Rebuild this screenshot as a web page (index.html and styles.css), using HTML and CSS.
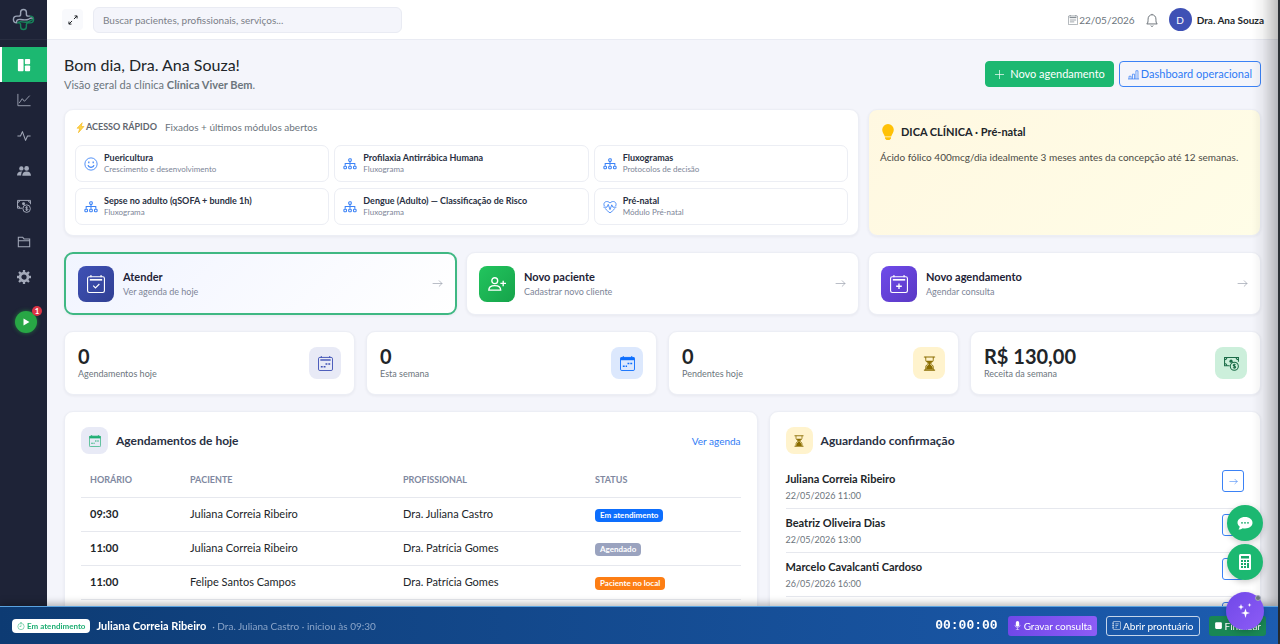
FILE: index.html
```
<!DOCTYPE html>
<html lang="pt-BR">
<head>
  <meta charset="UTF-8">
  <meta name="viewport" content="width=device-width, initial-scale=1.0">
  <title>Painel - Clínica Viver Bem</title>
  <link rel="stylesheet" href="styles.css">
</head>
<body>
  <svg class="sprite" aria-hidden="true">
    <symbol id="i-arrow" viewBox="0 0 16 16"><path d="M1.5 8h13M10.5 4l4 4-4 4" fill="none" stroke="currentColor" stroke-linecap="round" stroke-linejoin="round"/></symbol>
    <symbol id="i-flow" viewBox="0 0 16 16"><g fill="none" stroke="currentColor" stroke-width="1.2"><rect x="6.5" y="2" width="3" height="3" rx="1"/><path d="M8 5v5M2.5 10V7.500h11V10"/><rect x="1" y="10.500" width="3" height="3" rx="1"/><rect x="6.500" y="10.500" width="3" height="3" rx="1"/><rect x="12" y="10.500" width="3" height="3" rx="1"/></g></symbol>
    <symbol id="i-cal" viewBox="0 0 16 16"><rect x="0.500" y="1.500" width="15" height="14" rx="1.500" fill="none" stroke="currentColor"/><path d="M3.500 0v2M12.500 0v2" stroke="currentColor"/><path d="M2.500 3.500h11v1.500h-11z" fill="currentColor"/></symbol>
    <symbol id="i-calfill" viewBox="0 0 16 16"><rect x="0.500" y="1.500" width="15" height="14" rx="1.500" fill="none" stroke="currentColor"/><path d="M3.500 0v2M12.500 0v2" stroke="currentColor"/><path d="M0.500 1.500h15v3h-15z" fill="currentColor"/><path d="M3 11h2M6 11h1.500M8 8h2M11 8h2" stroke="currentColor" stroke-width="1.500"/></symbol>
    <symbol id="i-hour" viewBox="0 0 16 16"><path d="M2.500 1h11M2.500 15h11" stroke="currentColor" stroke-width="1.200" stroke-linecap="round"/><path d="M4 1v3c0 2 1.500 3 3 4-1.500 1-3 2-3 4v3M12 1v3c0 2-1.500 3-3 4 1.500 1 3 2 3 4v3" fill="none" stroke="currentColor"/><path d="M5 5h6c0 1.500-2 2.500-2.500 3 .5 2 2.500 2 3 5v1.500h-7V13c.5-3 2.500-3 3-5C7 7.500 5 6.500 5 5z" fill="currentColor"/></symbol>
    <symbol id="i-cash" viewBox="0 0 16 16"><g fill="none" stroke="currentColor" stroke-width="1.100"><path d="M6 10.500H.600V1.600h14.800V6M3 1.600A2.400 2.400 0 0 1 .600 4M13 1.600A2.400 2.400 0 0 0 15.400 4M3 10.500A2.400 2.400 0 0 0 .600 8"/><circle cx="11" cy="11" r="4.300"/><path d="M12.300 9.700c-.3-.7-2.500-.8-2.500.3 0 1.200 2.600.8 2.600 2 0 1.100-2.400 1-2.700.1M11 8.300v5.400"/></g><circle cx="7.500" cy="5.500" r="1.700" fill="currentColor"/></symbol>
  </svg>

  <aside class="sidebar">
    <a href="#" class="brand" aria-label="Início">
      <svg viewBox="0 0 24 24"><g fill="none" stroke-width="1.500" stroke-linecap="round"><path stroke="#9aa3b5" d="M5 15.500C2 15.500 1.500 13.500 1.500 12c0-2 1.500-3.500 3.500-3.500h2C8.500 8.500 9 7.800 9 6.500V4.500a3 3 0 0 1 6 0v2c0 1.300.6 2 2 2h1.500M5 15.500c-1-2.500 1-4 4-3.500 3.500.6 6 1 8.500-.5 1.500-1 2.500-1.300 4-1"/><path stroke="#17835a" d="M19 8.500c2.500 0 3.500 1.500 3.500 3.500s-1.500 3.500-3.500 3.500h-2c-1.500 0-2 .7-2 2v2a3 3 0 0 1-6 0v-2c0-1.300-.6-2-2-2H6c1-1.500 2.500-1.500 4.500-1 3.500.8 6.500.5 8.500-1 1-.8 2-1.500 3.500-1.500"/></g></svg>
    </a>
    <nav>
      <a href="#" class="active" aria-label="Painel"><svg viewBox="0 0 16 16" fill="currentColor"><rect x="1" y="1" width="6.500" height="14" rx="1"/><rect x="9" y="1" width="6" height="6" rx="1"/><rect x="9" y="8.500" width="6" height="6.500" rx="1"/></svg></a>
      <a href="#" aria-label="Relatórios"><svg viewBox="0 0 16 16" fill="none" stroke="currentColor"><path d="M1 1v13.500h14.500M2.500 11.500L6 6.500l2.500 3L14.500 3"/></svg></a>
      <a href="#" aria-label="Atividade"><svg viewBox="0 0 16 16" fill="none" stroke="currentColor" stroke-width="1.200" stroke-linejoin="round"><path d="M.500 8H4l2.200-5 3.600 10L12 8h3.500"/></svg></a>
      <a href="#" aria-label="Pacientes"><svg viewBox="0 0 16 16" fill="currentColor"><circle cx="5" cy="5" r="2.500"/><circle cx="11" cy="5" r="2.700"/><path d="M0 13c0-3 2-4.500 5-4.500l1 .2C5 10 4.800 11 4.800 13zM6 13.500c0-3.500 2-5 5-5s5 1.500 5 5z"/></svg></a>
      <a href="#" aria-label="Financeiro"><svg><use href="#i-cash"/></svg></a>
      <a href="#" aria-label="Arquivos"><svg viewBox="0 0 16 16" fill="none" stroke="currentColor" stroke-width="1.200"><path d="M1.500 13.500v-11h5l1.500 2h6.500v9zM1.500 6.500h13"/></svg></a>
      <a href="#" aria-label="Configurações"><svg viewBox="0 0 16 16"><circle cx="8" cy="8" r="4.500" fill="none" stroke="currentColor" stroke-width="3"/><path d="M8 0v3M8 13v3M0 8h3M13 8h3M2.300 2.300l2 2M11.700 11.700l2 2M2.300 13.700l2-2M11.700 4.300l2-2" stroke="currentColor" stroke-width="2.600"/></svg></a>
    </nav>
    <button class="play" aria-label="Atendimentos em andamento"><svg viewBox="0 0 16 16"><path d="M4 2.500v11L13.500 8z" fill="currentColor"/></svg><span class="count">1</span></button>
  </aside>

  <div class="page">
    <header class="topbar">
      <button class="expand" aria-label="Tela cheia"><svg viewBox="0 0 16 16" fill="none" stroke="currentColor" stroke-width="1.600"><path d="M9.500 6.500l5-5M10.500 1.500h4v4M6.500 9.500l-5 5M1.500 10.500v4h4"/></svg></button>
      <input type="search" aria-label="Buscar" placeholder="Buscar pacientes, profissionais, serviços...">
      <div class="user-area">
        <span class="date"><svg viewBox="0 0 16 16"><use href="#i-cal"/><path d="M3 8h10M3 11h7" stroke="currentColor"/></svg>22/05/2026</span>
        <button class="bell" aria-label="Notificações"><svg viewBox="0 0 16 16" fill="none" stroke="currentColor"><path d="M8 1v1M2 12.500c1.500-1 1.500-3 1.500-5.500 0-3 2-5 4.500-5s4.500 2 4.500 5c0 2.500 0 4.500 1.500 5.500zM6.500 14.500c.5 1 2.500 1 3 0"/></svg></button>
        <span class="avatar">D</span>
        <strong>Dra. Ana Souza</strong>
      </div>
    </header>

    <main>
      <div class="heading">
        <div>
          <h1>Bom dia, Dra. Ana Souza!</h1>
          <p>Visão geral da clínica <strong>Clínica Viver Bem</strong>.</p>
        </div>
        <div class="heading-actions">
          <a href="#" class="btn btn-green"><svg viewBox="0 0 16 16"><path d="M8 2v12M2 8h12" stroke="currentColor" stroke-linecap="round"/></svg>Novo agendamento</a>
          <a href="#" class="btn btn-outline"><svg viewBox="0 0 16 16" fill="none" stroke="currentColor"><path d="M0 14.500h16M1.500 14.500v-4h3v4M6.500 14.500v-7h3v7M11.500 14.500v-12h3v12"/></svg>Dashboard operacional</a>
        </div>
      </div>

      <section class="row row-thirds">
        <div class="card quick">
          <div class="quick-title"><svg viewBox="0 0 16 16"><path d="M10.500 1L3 9h4l-2 6.500L13 6.500H9z" fill="#ffd54a" stroke="#f5b921"/></svg><h2>ACESSO RÁPIDO</h2><span>Fixados + últimos módulos abertos</span></div>
          <div class="quick-grid">
            <a href="#"><svg viewBox="0 0 16 16" fill="none" stroke="currentColor"><circle cx="8" cy="8" r="7"/><path d="M4.500 9.500c1.200 3 5.800 3 7 0M5.500 5v2M10.500 5v2" stroke-width="1.400"/></svg><span><b>Puericultura</b><small>Crescimento e desenvolvimento</small></span></a>
            <a href="#"><svg><use href="#i-flow"/></svg><span><b>Profilaxia Antirrábica Humana</b><small>Fluxograma</small></span></a>
            <a href="#"><svg><use href="#i-flow"/></svg><span><b>Fluxogramas</b><small>Protocolos de decisão</small></span></a>
            <a href="#"><svg><use href="#i-flow"/></svg><span><b>Sepse no adulto (qSOFA + bundle 1h)</b><small>Fluxograma</small></span></a>
            <a href="#"><svg><use href="#i-flow"/></svg><span><b>Dengue (Adulto) — Classificação de Risco</b><small>Fluxograma</small></span></a>
            <a href="#"><svg viewBox="0 0 16 16" fill="none" stroke="currentColor"><path d="M1.500 7C-.5 2 5 0 8 3.500 11 0 16.500 2 14.500 7M2.500 9.500C4 12 6.500 13.500 8 14.700c1.500-1.200 4-2.700 5.500-5.200M.500 8.200h4L6 5l2 6 2-5.500 1.300 2.700h4"/></svg><span><b>Pré-natal</b><small>Módulo Pré-natal</small></span></a>
          </div>
        </div>
        <div class="card tip">
          <h2><svg viewBox="0 0 16 16" fill="#ffc107"><path d="M8 0a5.800 5.800 0 0 0-5.800 5.800c0 2.800 1.800 4 2.600 6.700h6.400c.8-2.700 2.600-3.900 2.600-6.700A5.800 5.800 0 0 0 8 0zM5 13.300h6v1.200L9.500 16h-3L5 14.500z"/></svg>DICA CLÍNICA · Pré-natal</h2>
          <p>Ácido fólico 400mcg/dia idealmente 3 meses antes da concepção até 12 semanas.</p>
        </div>
      </section>

      <section class="row actions">
        <a href="#" class="card action primary"><span class="tile blue"><svg viewBox="0 0 16 16"><use href="#i-cal"/><path d="M5.500 9.500l2 2 3.500-3.500" fill="none" stroke="currentColor"/></svg></span><span><b>Atender</b><small>Ver agenda de hoje</small></span><svg class="go"><use href="#i-arrow"/></svg></a>
        <a href="#" class="card action"><span class="tile green"><svg viewBox="0 0 16 16" fill="none" stroke="currentColor" stroke-width="1.200"><circle cx="6" cy="5" r="2.600"/><path d="M.700 13.500c0-3 2-4 5.300-4s5.300 1 5.300 4zM13.500 5v5M11 7.500h5"/></svg></span><span><b>Novo paciente</b><small>Cadastrar novo cliente</small></span><svg class="go"><use href="#i-arrow"/></svg></a>
        <a href="#" class="card action"><span class="tile purple"><svg viewBox="0 0 16 16"><use href="#i-cal"/><path d="M8 7.500v5M5.500 10h5" stroke="currentColor" stroke-width="1.200"/></svg></span><span><b>Novo agendamento</b><small>Agendar consulta</small></span><svg class="go"><use href="#i-arrow"/></svg></a>
      </section>

      <section class="row stats">
        <div class="card stat"><div><b>0</b><small>Agendamentos hoje</small></div><span class="chip indigo"><svg viewBox="0 0 16 16"><use href="#i-cal"/><path d="M3 11.500h2M6 11.500h2M8 8.500h2M11 8.500h2" stroke="currentColor" stroke-width="1.500"/></svg></span></div>
        <div class="card stat"><div><b>0</b><small>Esta semana</small></div><span class="chip sky"><svg><use href="#i-calfill"/></svg></span></div>
        <div class="card stat"><div><b>0</b><small>Pendentes hoje</small></div><span class="chip amber"><svg><use href="#i-hour"/></svg></span></div>
        <div class="card stat"><div><b>R$ 130,00</b><small>Receita da semana</small></div><span class="chip mint"><svg><use href="#i-cash"/></svg></span></div>
      </section>

      <section class="row lists">
        <div class="card panel">
          <div class="panel-head"><span class="chip small indigo green-icon"><svg><use href="#i-calfill"/></svg></span><h2>Agendamentos de hoje</h2><a href="#">Ver agenda</a></div>
          <table>
            <thead><tr><th>HORÁRIO</th><th>PACIENTE</th><th>PROFISSIONAL</th><th>STATUS</th></tr></thead>
            <tbody>
              <tr><td>09:30</td><td>Juliana Correia Ribeiro</td><td>Dra. Juliana Castro</td><td><span class="badge in-progress">Em atendimento</span></td></tr>
              <tr><td>11:00</td><td>Juliana Correia Ribeiro</td><td>Dra. Patrícia Gomes</td><td><span class="badge scheduled">Agendado</span></td></tr>
              <tr><td>11:00</td><td>Felipe Santos Campos</td><td>Dra. Patrícia Gomes</td><td><span class="badge on-site">Paciente no local</span></td></tr>
            </tbody>
          </table>
        </div>
        <div class="card panel">
          <div class="panel-head"><span class="chip small amber"><svg><use href="#i-hour"/></svg></span><h2>Aguardando confirmação</h2></div>
          <ul class="waiting">
            <li><div><b>Juliana Correia Ribeiro</b><small>22/05/2026 11:00</small></div><a href="#" aria-label="Abrir"><svg><use href="#i-arrow"/></svg></a></li>
            <li><div><b>Beatriz Oliveira Dias</b><small>22/05/2026 13:00</small></div><a href="#" aria-label="Abrir"><svg><use href="#i-arrow"/></svg></a></li>
            <li><div><b>Marcelo Cavalcanti Cardoso</b><small>26/05/2026 16:00</small></div><a href="#" aria-label="Abrir"><svg><use href="#i-arrow"/></svg></a></li>
            <li class="next"><a href="#" aria-label="Abrir"></a></li>
          </ul>
        </div>
      </section>
    </main>
  </div>

  <div class="edge"></div>

  <footer class="session">
    <span class="status"><svg viewBox="0 0 16 16" fill="none" stroke="currentColor"><circle cx="8" cy="9" r="6.300"/><path d="M8 5v4H5M6 .800h4"/></svg>Em atendimento</span>
    <strong>Juliana Correia Ribeiro</strong>
    <span class="info">· Dra. Juliana Castro · iniciou às 09:30</span>
    <span class="timer">00:00:00</span>
    <button class="record"><svg viewBox="0 0 16 16"><rect x="5" y="0" width="6" height="10" rx="3" fill="currentColor"/><path d="M3.500 7c0 6 9 6 9 0M8 12v3.500M5 15.500h6" fill="none" stroke="currentColor"/></svg>Gravar consulta</button>
    <button class="open"><svg viewBox="0 0 16 16" fill="none" stroke="currentColor"><rect x="2" y="1" width="13" height="14" rx="1"/><path d="M.500 4h3M.500 8h3M.500 12h3M6 5h6M6 8h5M6 11h3"/></svg>Abrir prontuário</button>
    <button class="finish"><svg viewBox="0 0 16 16"><rect x="2" y="2" width="12" height="12" rx="2" fill="currentColor"/></svg>Finalizar</button>
  </footer>

  <div class="floating">
    <button aria-label="Chat"><svg viewBox="0 0 16 16"><path d="M8 2c4.500 0 7.500 2.500 7.500 5.800S12.500 13.500 8 13.500c-.8 0-1.600-.1-2.300-.3-1 .7-2.500 1.300-4.200 1.300.8-1 1.200-2 1.200-3C1.300 10.500.5 9.200.5 7.800.5 4.500 3.500 2 8 2z" fill="#fff"/><g fill="#18a86a"><circle cx="5" cy="7.800" r=".9"/><circle cx="8" cy="7.800" r=".9"/><circle cx="11" cy="7.800" r=".9"/></g></svg></button>
    <button aria-label="Calculadora"><svg viewBox="0 0 16 16"><rect x="2" y="0" width="12" height="16" rx="1.500" fill="#fff"/><path d="M4 2h8v2.500H4zM4 6h2v2H4zM7 6h2v2H7zM10 6h2v2h-2zM4 9h2v2H4zM7 9h2v2H7zM4 12h2v2H4zM7 12h2v2H7zM10 9h2v5h-2z" fill="#18a86a"/></svg></button>
    <button class="ai" aria-label="Assistente"><svg viewBox="0 0 16 16" fill="#fff"><path d="M8.500 5.500l1.100 3.400 3.400 1.100-3.400 1.100-1.100 3.900-1.100-3.900L4 10l3.400-1.100zM4 1l.8 2.200L7 4l-2.200.8L4 7l-.8-2.200L1 4l2.200-.8zM12.500 0l.5 1.500 1.500.5-1.500.5-.5 1.500-.5-1.500-1.500-.5 1.500-.5z"/></svg><i></i></button>
  </div>
</body>
</html>
```
FILE: styles.css
```
* {
  box-sizing: border-box;
}
body {
  margin: 0;
  height: 100vh;
  overflow: hidden;
  display: flex;
  background: #f4f5fb;
  color: #212529;
  font-family: Lato, "Noto Sans", sans-serif;
  font-size: 11px;
  line-height: 18px;
}
h1, h2, p, ul {
  margin: 0;
  padding: 0;
}
a {
  color: inherit;
  text-decoration: none;
}
button {
  font: inherit;
  border: 0;
  padding: 0;
  cursor: pointer;
}
svg {
  display: block;
  flex: none;
  width: 14px;
  height: 14px;
}
.sprite {
  display: none;
}
b, strong, h2 {
  font-weight: 700;
}
small {
  display: block;
  font-size: 9px;
  color: #7d8597;
}

/* menu lateral */
.sidebar {
  flex: none;
  width: 47px;
  background: #1e2337;
  color: #a3a9b9;
}
.brand {
  display: flex;
  align-items: center;
  justify-content: center;
  height: 40px;
  margin-bottom: 7px;
  border-bottom: 1px solid #282d40;
}
.brand svg {
  width: 23px;
  height: 23px;
}
.sidebar nav {
  display: flex;
  flex-direction: column;
  height: 248px;
}
.sidebar nav a {
  flex: 1;
  display: flex;
  align-items: center;
  justify-content: center;
  border-left: 2px solid transparent;
  padding-right: 2px;
}
.sidebar nav a.active {
  color: #fff;
  background: #1cb871;
  border-color: #fff;
}
.play {
  position: relative;
  display: flex;
  align-items: center;
  justify-content: center;
  width: 22px;
  height: 22px;
  margin: 16px 0 0 15px;
  border-radius: 50%;
  background: #28a745;
  color: #fff;
  box-shadow: 0 0 4px rgba(40, 167, 69, .6);
}
.play svg {
  width: 10px;
  height: 10px;
}
.count {
  position: absolute;
  top: -5px;
  right: -5px;
  width: 10px;
  height: 10px;
  border-radius: 50%;
  background: #dc3545;
  font-size: 8px;
  font-weight: 700;
  line-height: 10px;
}

/* topo */
.page {
  flex: 1;
  min-width: 0;
}
.topbar {
  display: flex;
  align-items: center;
  height: 40px;
  padding: 0 16px 0 15px;
  background: #fff;
  border-bottom: 1px solid #e9ebf3;
}
.expand {
  display: grid;
  place-items: center;
  width: 21px;
  height: 21px;
  margin-right: 10px;
  border-radius: 4px;
  background: #f8f9fc;
  color: #212529;
}
.expand svg {
  width: 10px;
  height: 10px;
}
.topbar input {
  width: 309px;
  height: 26px;
  padding: 0 9px;
  border: 1px solid #e9ebf3;
  border-radius: 6px;
  background: #f4f5fb;
  font: inherit;
  font-size: 10px;
}
.topbar input::placeholder {
  color: #7b8088;
}
.user-area {
  display: flex;
  align-items: center;
  margin-left: auto;
  font-size: 10px;
}
.date {
  display: flex;
  align-items: center;
  gap: 1px;
  color: #6c757d;
}
.date svg {
  width: 10px;
  height: 10px;
}
.bell {
  margin: 0 10px;
  background: none;
  color: #5c636a;
}
.avatar {
  display: grid;
  place-items: center;
  width: 23px;
  height: 23px;
  margin-right: 5px;
  border-radius: 50%;
  background: #3f51b5;
  color: #fff;
}

/* conteúdo */
main {
  padding: 14px 19px 0 17px;
}
.heading {
  display: flex;
  justify-content: space-between;
  align-items: center;
  margin-bottom: 15px;
}
h1 {
  font-size: 16px;
  font-weight: 400;
  line-height: 22px;
}
.heading p {
  color: #6c757d;
}
.heading-actions {
  display: flex;
  gap: 5px;
}
.btn {
  display: flex;
  align-items: center;
  gap: 5px;
  height: 26px;
  padding: 0 8px;
  border: 1px solid #1cb871;
  border-radius: 4px;
}
.btn svg {
  width: 11px;
  height: 11px;
}
.btn-green {
  background: #1cb871;
  color: #fff;
}
.btn-outline {
  gap: 2px;
  border-color: #3b82f6;
  color: #2f7bf5;
}
.row {
  display: grid;
  margin-bottom: 16px;
}
.row-thirds {
  grid-template-columns: 795fr 393fr;
  column-gap: 9px;
}
.card {
  background: #fff;
  border: 1px solid #eceef5;
  border-radius: 9px;
  box-shadow: 0 1px 3px rgba(30, 35, 55, .06);
}
.quick {
  padding: 8px 10px 10px;
}
.quick-title {
  display: flex;
  align-items: center;
  color: #6c757d;
  font-size: 10px;
  margin-bottom: 9px;
}
.quick-title svg {
  width: 11px;
  height: 11px;
}
.quick-title h2 {
  font-size: 9px;
  margin-right: 8px;
  color: #5f666e;
}
.quick-grid {
  display: grid;
  grid-template-columns: repeat(3, 1fr);
  gap: 6px 5px;
}
.quick-grid a {
  display: flex;
  align-items: center;
  gap: 6px;
  height: 37px;
  padding: 0 8px;
  border: 1px solid #eceef4;
  border-radius: 7px;
}
.quick-grid svg {
  color: #3b82f6;
}
.quick-grid b {
  display: block;
  font-size: 9px;
  line-height: 12px;
  color: #293042;
}
.quick-grid small {
  font-size: 8px;
  line-height: 11px;
}
.tip {
  padding: 12px 11px;
  background: linear-gradient(135deg, #fff8e1, #fffde7);
}
.tip h2 {
  display: flex;
  align-items: center;
  gap: 5px;
  font-size: 11px;
  line-height: 20px;
  margin-bottom: 6px;
}
.tip svg {
  width: 16px;
  height: 16px;
}
.tip p {
  font-size: 10px;
  color: #4a4a45;
}
.actions {
  grid-template-columns: repeat(3, 1fr);
  gap: 9px;
}
.action {
  display: flex;
  align-items: center;
  gap: 9px;
  height: 63px;
  padding: 0 12px;
}
.action b {
  display: block;
  font-size: 11px;
  line-height: 15px;
  color: #1e2337;
}
.action small {
  line-height: 15px;
}
.action.primary {
  border: 2px solid #3fb883;
  background: linear-gradient(135deg, #f1f4ff, #fff);
}
.go {
  width: 11px;
  height: 11px;
  margin-left: auto;
  color: #9aa0ad;
}
.tile {
  display: grid;
  place-items: center;
  width: 36px;
  height: 36px;
  border-radius: 8px;
  color: #fff;
}
.tile svg {
  width: 18px;
  height: 18px;
}
.blue {
  background: linear-gradient(135deg, #3f51b5, #303f93);
}
.green {
  background: linear-gradient(135deg, #22c55e, #16a34a);
}
.purple {
  background: linear-gradient(135deg, #6f4bea, #5a38c4);
}
.stats {
  grid-template-columns: repeat(4, 1fr);
  gap: 11px;
}
.stat {
  display: flex;
  align-items: center;
  justify-content: space-between;
  height: 64px;
  padding: 0 13px;
}
.stat b {
  display: block;
  font-size: 20px;
  line-height: 22px;
}
.stat small {
  line-height: 14px;
  color: #6c757d;
}
.chip {
  display: grid;
  place-items: center;
  width: 32px;
  height: 32px;
  border-radius: 8px;
}
.chip svg {
  width: 15px;
  height: 15px;
}
.chip.small {
  width: 27px;
  height: 27px;
}
.chip.small svg {
  width: 12px;
  height: 12px;
}
.indigo {
  background: #e8eaf6;
  color: #3f51b5;
}
.green-icon {
  color: #1fae73;
}
.sky {
  background: #dce8fd;
  color: #0d6efd;
}
.amber {
  background: #fff3cd;
  color: #8a6d00;
}
.mint {
  background: #ccefdb;
  color: #1a6b47;
}
.lists {
  grid-template-columns: 693fr 492fr;
  gap: 11px;
}
.panel {
  padding: 15px 16px;
  min-height: 260px;
}
.panel-head {
  display: flex;
  align-items: center;
  gap: 8px;
}
.panel-head h2 {
  font-size: 12px;
  color: #293042;
}
.panel-head a {
  margin-left: auto;
  font-size: 10px;
  color: #2f7bf5;
}
table {
  width: 100%;
  margin-top: 9px;
  border-collapse: collapse;
}
th, td {
  height: 34px;
  padding: 0 9px;
  text-align: left;
  border-bottom: 1px solid #e6e8ee;
}
th {
  font-size: 9px;
  font-weight: 700;
  color: #8088a0;
}
th:nth-child(1) { width: 100px; }
th:nth-child(2) { width: 213px; }
th:nth-child(3) { width: 192px; }
td:first-child {
  font-weight: 700;
}
.badge {
  display: inline-block;
  padding: 0 5px;
  border-radius: 4px;
  color: #fff;
  font-size: 8px;
  font-weight: 700;
  line-height: 13px;
}
.in-progress { background: #0d6efd; }
.scheduled { background: #9aa3bf; }
.on-site { background: #fd7e14; }
.waiting {
  list-style: none;
  margin-top: 11px;
}
.waiting li {
  display: flex;
  align-items: flex-start;
  justify-content: space-between;
  height: 44px;
  padding-top: 5px;
  border-bottom: 1px solid #e6e8ee;
}
.waiting b {
  display: block;
  font-size: 11px;
}
.waiting small {
  line-height: 15px;
  color: #6c757d;
}
.waiting a {
  display: grid;
  place-items: center;
  width: 22px;
  height: 22px;
  border: 1px solid #3b82f6;
  border-radius: 3px;
  color: #3b82f6;
}
.waiting svg {
  width: 9px;
  height: 9px;
}
.waiting .next {
  justify-content: flex-end;
}

/* borda direita da janela */
.edge {
  position: fixed;
  top: 0;
  right: 0;
  bottom: 0;
  width: 28px;
  border-right: 2px solid #2b3035;
  background: linear-gradient(90deg, rgba(0, 0, 0, 0), rgba(0, 0, 0, .05) 40%, rgba(0, 0, 0, .25));
  pointer-events: none;
}

/* barra do atendimento */
.session {
  position: fixed;
  left: 0;
  right: 2px;
  bottom: 0;
  display: flex;
  align-items: center;
  height: 38px;
  padding: 0 12px;
  border-top: 1px solid #5ba3e0;
  background: linear-gradient(90deg, #0d3b73, #1c5cb0);
  box-shadow: 0 -2px 8px rgba(0, 0, 0, .3);
  color: #fff;
}
.status {
  display: flex;
  align-items: center;
  gap: 2px;
  height: 14px;
  padding: 0 5px;
  margin-right: 6px;
  border-radius: 4px;
  background: #fff;
  color: #1fae73;
  font-size: 8px;
  font-weight: 700;
}
.status svg {
  width: 8px;
  height: 8px;
}
.session strong {
  font-size: 11px;
  margin-right: 6px;
}
.info {
  font-size: 10px;
  color: #8ba5c9;
}
.timer {
  margin-left: auto;
  margin-right: 10px;
  font-family: "Liberation Mono", monospace;
  font-size: 13px;
  font-weight: 700;
}
.session button {
  display: flex;
  align-items: center;
  gap: 2px;
  height: 20px;
  padding: 0 5px;
  border-radius: 3px;
  color: #fff;
  font-size: 10px;
}
.session button svg {
  width: 9px;
  height: 9px;
}
.session .record {
  background: linear-gradient(90deg, #7048e8, #8d5cf6);
}
.session .open {
  margin: 0 9px;
  border: 1px solid #c5d5ea;
  background: none;
}
.session .finish {
  background: #198754;
}

/* botões flutuantes */
.floating {
  position: fixed;
  right: 16px;
  bottom: 14px;
  display: flex;
  flex-direction: column;
  align-items: center;
  gap: 3px;
}
.floating button {
  position: relative;
  display: grid;
  place-items: center;
  width: 36px;
  height: 36px;
  border-radius: 50%;
  background: #1cb871;
  box-shadow: 0 2px 6px rgba(0, 0, 0, .2);
}
.floating button svg {
  width: 16px;
  height: 16px;
}
.floating .ai {
  width: 38px;
  height: 38px;
  margin-top: 9px;
  background: linear-gradient(135deg, #7048e8, #8d5cf6);
}
.floating i {
  position: absolute;
  top: 3px;
  right: 3px;
  width: 6px;
  height: 6px;
  border: 1px solid #a3a9b9;
  border-radius: 50%;
  background: #6c757d;
}
```
